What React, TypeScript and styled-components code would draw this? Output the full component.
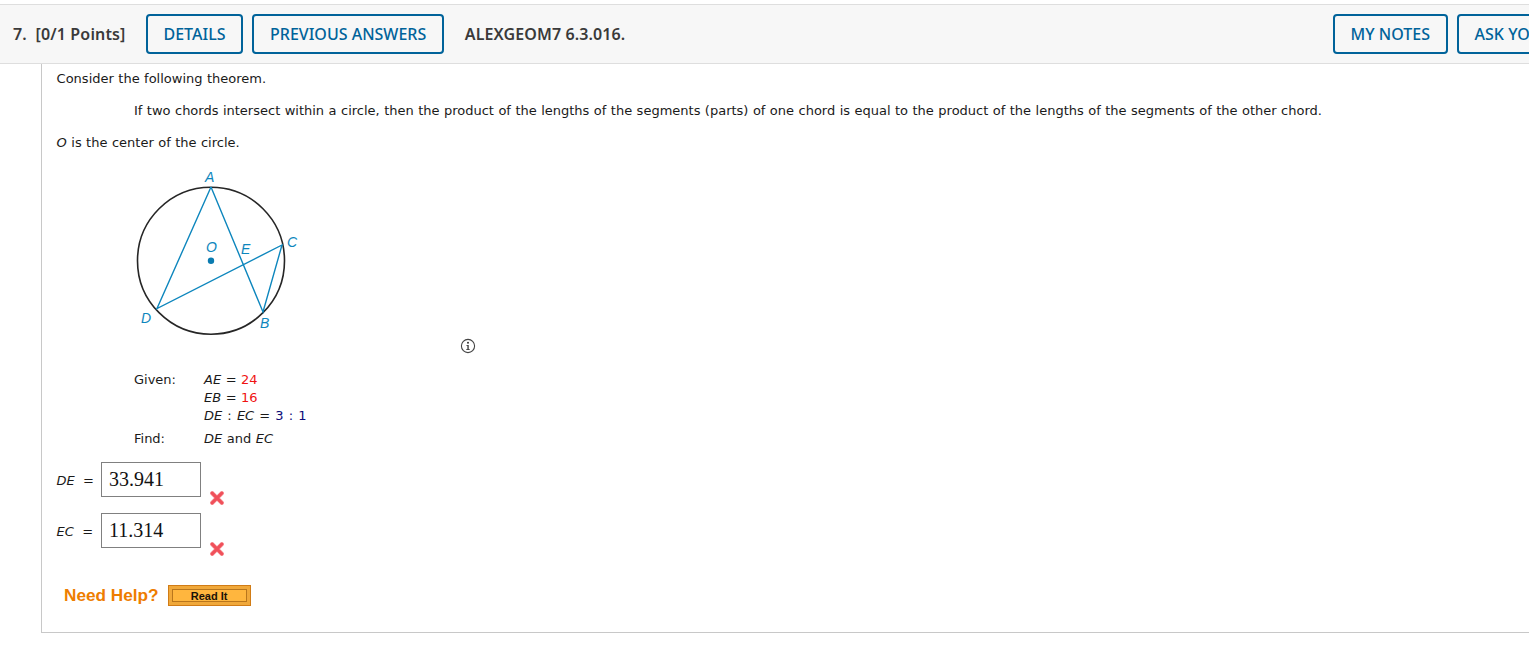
import styled, { createGlobalStyle } from "styled-components";

const GlobalStyle = createGlobalStyle`
  html, body {
    margin: 0;
    padding: 0;
    background: #fff;
    overflow: hidden;
  }
`;

const Page = styled.div`
  width: 1655px;
  padding-top: 4px;
  font-family: "DejaVu Sans", Verdana, sans-serif;
  font-size: 13px;
  color: #1a1a1a;
`;

const Header = styled.header`
  height: 58px;
  display: flex;
  align-items: center;
  justify-content: space-between;
  padding: 0 12px 0 13px;
  background: #f7f7f7;
  border-top: 1px solid #dedede;
  border-bottom: 1px solid #dedede;
  font-family: "Noto Sans", "Open Sans", sans-serif;
  font-size: 16px;
`;

const HeaderGroup = styled.div`
  display: flex;
  align-items: center;
  gap: 8.6px;
`;

const PointsLabel = styled.span`
  font-weight: 600;
  color: #3a3a3a;
  margin-right: 11.4px;
  white-space: pre;
  letter-spacing: 0.15px;
`;

const AssignmentCode = styled.span`
  font-weight: 600;
  color: #3a3a3a;
  margin-left: 12px;
  letter-spacing: 0.1px;
`;

const OutlineButton = styled.button`
  height: 40px;
  padding: 0 16px;
  box-sizing: border-box;
  background: transparent;
  border: 2px solid #00639a;
  border-radius: 4px;
  color: #00639a;
  font: inherit;
  font-weight: 500;
  white-space: nowrap;
`;

const QuestionBody = styled.main`
  margin-left: 41px;
  height: 569px;
  box-sizing: border-box;
  padding: 7px 0 0 14.6px;
  border-left: 1px solid #c8c8c8;
  border-bottom: 1px solid #c8c8c8;
`;

const Line = styled.p`
  margin: 0 0 16px;
  line-height: 16px;
  white-space: nowrap;
  word-spacing: 0.32px;
`;

const IndentedLine = styled(Line)`
  padding-left: 77.4px;
`;

const FigureRow = styled.div`
  display: flex;
  align-items: flex-end;
  height: 187px;
  margin-top: -5px;
  padding-left: 63.4px;
`;

const FigureSvg = styled.svg`
  display: block;
  flex: none;
  margin-bottom: 9px;
`;

const InfoMark = styled.svg`
  margin-left: 150px;
  margin-bottom: -5px;
  flex: none;
`;

const GivenGrid = styled.div`
  display: grid;
  grid-template-columns: 70px auto;
  justify-content: start;
  margin: 22px 0 0 77.4px;
  line-height: 18px;
  word-spacing: 0.4px;
`;

const GivenLabel = styled.span``;

const FindLabel = styled.span`
  margin-top: 5px;
`;

const GivenValues = styled.div`
  display: flex;
  flex-direction: column;
`;

const RatioLine = styled.span`
  word-spacing: 1px;
`;

const FindValue = styled.span`
  margin-top: 5px;
`;

const Red = styled.span`
  color: #f01212;
`;

const Navy = styled.span`
  color: #0c0c78;
`;

const AnswerList = styled.div`
  display: flex;
  flex-direction: column;
  gap: 8px;
  margin-top: 14px;
`;

const AnswerRow = styled.div`
  display: flex;
  align-items: flex-start;
`;

const AnswerLabel = styled.span`
  width: 44.4px;
  padding-top: 11px;
  line-height: 16px;
`;

const AnswerBox = styled.div`
  width: 100px;
  height: 35px;
  box-sizing: border-box;
  padding-left: 7px;
  border: 1px solid #808080;
  font-family: "Liberation Serif", "Times New Roman", serif;
  font-size: 20px;
  line-height: 32px;
  color: #111;
`;

const WrongMark = styled.svg`
  margin: 29px 0 0 9px;
`;

const HelpRow = styled.div`
  display: flex;
  align-items: center;
  gap: 9px;
  margin: 29px 0 0 7.4px;
`;

const HelpLabel = styled.span`
  font-family: "Liberation Sans", Arial, sans-serif;
  font-size: 17.2px;
  font-weight: 700;
  color: #ee7d00;
`;

const ReadItButton = styled.button`
  width: 83px;
  height: 21px;
  padding: 0;
  box-sizing: border-box;
  background: #ffb63e;
  border: 1px solid #d17c16;
  box-shadow: inset 0 0 0 3px #f0a83a, inset 0 0 0 4px #b9761c;
  font-family: "Liberation Sans", Arial, sans-serif;
  font-size: 11px;
  font-weight: 700;
  color: #1a1208;
`;

const Italic = styled.i``;

function Diagram() {
  const blue = "#0d86bd";
  const label = {
    fontFamily: "Liberation Sans, Arial, sans-serif",
    fontStyle: "italic",
    fontSize: 14,
    fill: blue,
  };
  return (
    <FigureSvg width="190" height="180" viewBox="120 160 190 180">
      <circle cx="211" cy="260.7" r="73.5" fill="none" stroke="#262626" strokeWidth="1.6" />
      <path
        d="M211 187 L157 308.5 L282 245 L263 312 L211 187"
        fill="none"
        stroke={blue}
        strokeWidth="1.4"
      />
      <circle cx="211" cy="260.7" r="3.2" fill="#0a7bb0" />
      <text x="205" y="182" style={label}>A</text>
      <text x="287" y="247" style={label}>C</text>
      <text x="206" y="252" style={label}>O</text>
      <text x="241" y="254" style={label}>E</text>
      <text x="141" y="323" style={label}>D</text>
      <text x="260" y="328" style={label}>B</text>
    </FigureSvg>
  );
}

function InfoIcon() {
  return (
    <InfoMark width="16" height="16" viewBox="0 0 16 16">
      <circle cx="8" cy="8" r="6.6" fill="none" stroke="#444" strokeWidth="1.1" />
      <circle cx="8" cy="4.8" r="1" fill="#333" />
      <path d="M6.4 7h2.3v4.2h1.1v.8H6.2v-.8h1.2V7.8h-1z" fill="#333" />
    </InfoMark>
  );
}

function CrossIcon() {
  return (
    <WrongMark width="14" height="14" viewBox="0 0 14 14">
      <path d="M2.2 2.2 L11.8 11.8 M11.8 2.2 L2.2 11.8" stroke="#f9a6a9" strokeWidth="4.4" strokeLinecap="round" />
      <path d="M2.2 2.2 L11.8 11.8 M11.8 2.2 L2.2 11.8" stroke="#f0505a" strokeWidth="3.2" strokeLinecap="round" />
    </WrongMark>
  );
}

function Answer({ name, value }: { name: string; value: string }) {
  return (
    <AnswerRow>
      <AnswerLabel>
        <Italic>{name}</Italic> &nbsp;=
      </AnswerLabel>
      <AnswerBox>{value}</AnswerBox>
      <CrossIcon />
    </AnswerRow>
  );
}

export default function App() {
  return (
    <Page>
      <GlobalStyle />
      <Header>
        <HeaderGroup>
          <PointsLabel>7.  [0/1 Points]</PointsLabel>
          <OutlineButton>DETAILS</OutlineButton>
          <OutlineButton>PREVIOUS ANSWERS</OutlineButton>
          <AssignmentCode>ALEXGEOM7 6.3.016.</AssignmentCode>
        </HeaderGroup>
        <HeaderGroup>
          <OutlineButton>MY NOTES</OutlineButton>
          <OutlineButton>ASK YOUR TEACHER</OutlineButton>
        </HeaderGroup>
      </Header>
      <QuestionBody>
        <Line>Consider the following theorem.</Line>
        <IndentedLine>
          If two chords intersect within a circle, then the product of the lengths of the segments (parts) of one chord is equal to the product of the lengths of the segments of the other chord.
        </IndentedLine>
        <Line>
          <Italic>O</Italic> is the center of the circle.
        </Line>
        <FigureRow>
          <Diagram />
          <InfoIcon />
        </FigureRow>
        <GivenGrid>
          <GivenLabel>Given:</GivenLabel>
          <GivenValues>
            <span>
              <Italic>AE</Italic> = <Red>24</Red>
            </span>
            <span>
              <Italic>EB</Italic> = <Red>16</Red>
            </span>
            <RatioLine>
              <Italic>DE</Italic> : <Italic>EC</Italic> = <Navy>3 : 1</Navy>
            </RatioLine>
          </GivenValues>
          <FindLabel>Find:</FindLabel>
          <FindValue>
            <Italic>DE</Italic> and <Italic>EC</Italic>
          </FindValue>
        </GivenGrid>
        <AnswerList>
          <Answer name="DE" value="33.941" />
          <Answer name="EC" value="11.314" />
        </AnswerList>
        <HelpRow>
          <HelpLabel>Need Help?</HelpLabel>
          <ReadItButton>Read It</ReadItButton>
        </HelpRow>
      </QuestionBody>
    </Page>
  );
}
